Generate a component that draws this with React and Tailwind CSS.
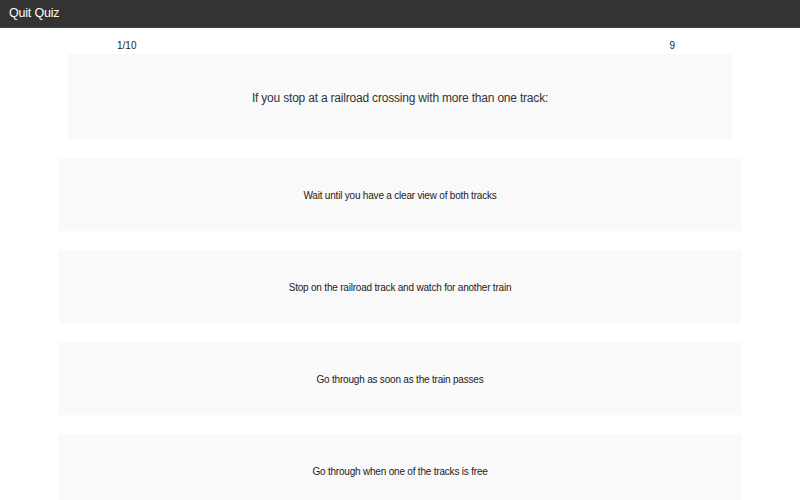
import React from "react";

const answers = [
  "Wait until you have a clear view of both tracks",
  "Stop on the railroad track and watch for another train",
  "Go through as soon as the train passes",
  "Go through when one of the tracks is free",
];

export default function App() {
  return (
    <div className="w-[800px] h-[500px] overflow-hidden bg-white text-[#333]" style={{ fontFamily: '"Liberation Sans", Arial, sans-serif' }}>
      <div className="h-[28px] bg-[#333333] flex items-center pl-[9px] border-b border-[#444]">
        <span className="text-white text-[12.5px] tracking-[-0.2px]">Quit Quiz</span>
      </div>
      <div className="flex justify-between pl-[117px] pr-[125px] h-[26px] items-end pb-[1px] text-[10px] text-[#222]">
        <span>1/10</span>
        <span>9</span>
      </div>
      <div className="mx-[68px] h-[85px] pt-[3px] bg-[#f9f9f9] flex items-center justify-center text-[12px] tracking-[-0.2px] text-[#333]">
        If you stop at a railroad crossing with more than one track:
      </div>
      <div className="flex flex-col gap-[19px] mx-[59px] mt-[19px]">
        {answers.map((a) => (
          <div key={a} className="h-[73px] pt-[2px] shrink-0 bg-[#f9f9f9] flex items-center justify-center text-[10px] tracking-[-0.2px] text-[#222]">
            {a}
          </div>
        ))}
      </div>
    </div>
  );
}
